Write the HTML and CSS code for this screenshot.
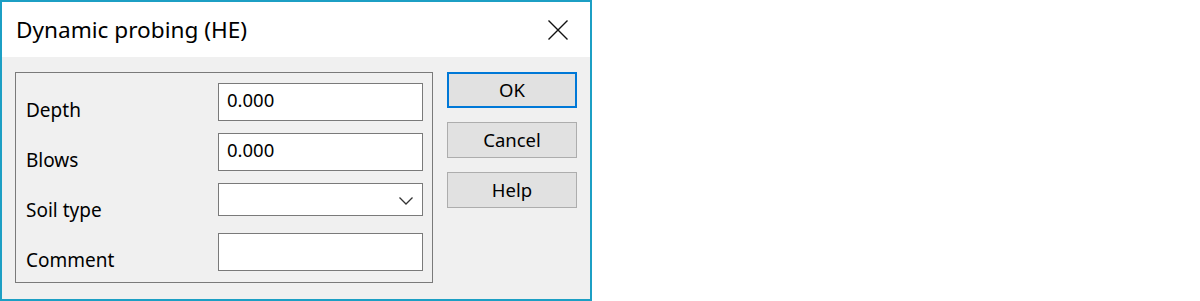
FILE: index.html
```html
<!DOCTYPE html>
<html lang="en">

<head>
    <meta charset="UTF-8">
    <meta name="viewport" content="width=device-width, initial-scale=1.0">
    <title>Dynamic probing (HE)</title>
    <link rel="stylesheet" href="styles.css">
</head>

<body>
    <div class="dialog">
        <div class="titlebar">
            <span class="title">Dynamic probing (HE)</span>
            <span class="close">
                <svg width="20" height="20" viewBox="0 0 20 20">
                    <path d="M0.5 0.5 L19.5 19.5 M19.5 0.5 L0.5 19.5" stroke="#111" stroke-width="1.4" fill="none" />
                </svg>
            </span>
        </div>
        <div class="content">
            <div class="group">
                <div class="row">
                    <label for="depth">Depth</label>
                    <input id="depth" class="field" type="text" value="0.000">
                </div>
                <div class="row">
                    <label for="blows">Blows</label>
                    <input id="blows" class="field" type="text" value="0.000">
                </div>
                <div class="row">
                    <label>Soil type</label>
                    <div class="combo">
                        <svg width="14" height="8" viewBox="0 0 14 8">
                            <path d="M0.5 0.5 L7 7 L13.5 0.5" stroke="#333" stroke-width="1.3" fill="none" />
                        </svg>
                    </div>
                </div>
                <div class="row">
                    <label for="comment">Comment</label>
                    <input id="comment" class="field" type="text" value="">
                </div>
            </div>
            <div class="buttons">
                <button class="default">OK</button>
                <button>Cancel</button>
                <button>Help</button>
            </div>
        </div>
    </div>
</body>

</html>
```

FILE: styles.css
```css
body {
    margin: 0;
    background-color: #ffffff;
    font-family: 'Noto Sans', 'Open Sans', sans-serif;
    color: #000;
}

.dialog {
    box-sizing: border-box;
    width: 592px;
    height: 301px;
    border: 2px solid #1c9fc4;
    display: flex;
    flex-direction: column;
}

.titlebar {
    height: 55px;
    flex-shrink: 0;
    background-color: #ffffff;
    display: flex;
    align-items: center;
    justify-content: space-between;
    padding: 0 22px 0 14px;
}

.title {
    font-size: 22.6px;
    line-height: 30px;
}

.close {
    display: flex;
}

.content {
    flex: 1;
    background-color: #f0f0f0;
    display: flex;
    align-items: flex-start;
    padding: 15px 0 0 13px;
}

.group {
    box-sizing: border-box;
    width: 418px;
    height: 211px;
    border: 1px solid #7a7a7a;
    padding: 10px 9px 0 10px;
}

.row {
    display: flex;
    justify-content: space-between;
    align-items: flex-start;
    height: 50px;
}

.row label {
    font-size: 19px;
    line-height: 24px;
    margin-top: 15px;
}

.field {
    box-sizing: border-box;
    width: 205px;
    height: 38px;
    margin: 0;
    border: 1px solid #7a7a7a;
    background-color: #ffffff;
    font-family: inherit;
    font-size: 18.5px;
    padding: 0 0 6px 8px;
    outline: none;
}

.combo {
    box-sizing: border-box;
    width: 205px;
    height: 33px;
    border: 1px solid #7a7a7a;
    background-color: #ffffff;
    display: flex;
    align-items: center;
    justify-content: flex-end;
    padding: 2px 9px 0 0;
}

.buttons {
    display: flex;
    flex-direction: column;
    gap: 14px;
    margin-left: 14px;
}

button {
    box-sizing: border-box;
    width: 130px;
    height: 36px;
    border: 1px solid #adadad;
    background-color: #e1e1e1;
    font-family: inherit;
    font-size: 18.5px;
    line-height: 24px;
    color: #000;
    padding: 0;
}

button.default {
    border: 2px solid #0078d7;
}
```
